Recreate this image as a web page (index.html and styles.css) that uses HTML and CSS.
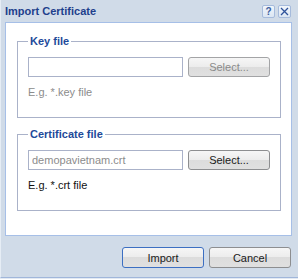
FILE: index.html
```html
<!DOCTYPE html>
<html lang="en">
<head>
  <meta charset="UTF-8" />
  <title>Import Certificate</title>
  <link rel="stylesheet" href="styles.css">
</head>
<body>

  <!-- Dialog window -->
  <div class="dialog">
    <div class="titlebar">
      <span class="title">Import Certificate</span>
      <div class="tools">
        <span class="tool tool-help">?</span>
        <span class="tool">
          <svg width="11" height="11" viewBox="0 0 11 11">
            <path d="M2 2 L9 9 M9 2 L2 9" stroke="#2d529b" stroke-width="1.3" fill="none" />
          </svg>
        </span>
      </div>
    </div>

    <!-- Main panel -->
    <div class="panel">
      <fieldset class="group">
        <legend>Key file</legend>
        <div class="row">
          <input class="field" type="text" value="" readonly>
          <button class="btn" disabled>Select...</button>
        </div>
        <p class="hint muted">E.g. *.key file</p>
      </fieldset>

      <fieldset class="group group-cert">
        <legend>Certificate file</legend>
        <div class="row">
          <input class="field" type="text" value="demopavietnam.crt" readonly>
          <button class="btn">Select...</button>
        </div>
        <p class="hint">E.g. *.crt file</p>
      </fieldset>
    </div>

    <!-- Footer buttons -->
    <div class="actions">
      <button class="btn btn-focus">Import</button>
      <button class="btn">Cancel</button>
    </div>
  </div>

</body>
</html>
```

FILE: styles.css
```css
* {
  margin: 0;
  padding: 0;
  box-sizing: border-box;
}

body {
  font-family: "Liberation Sans", Arial, sans-serif;
  font-size: 11px;
  background-color: #e2e9f2;
  width: 298px;
  height: 279px;
  overflow: hidden;
}

/* Dialog window */
.dialog {
  width: 298px;
  height: 278px;
  background-color: #d0dbe8;
  border-left: 1px solid #e6edf5;
  border-bottom: 1px solid #a0b6da;
  padding: 0 6px 0 4px;
}

.titlebar {
  height: 22px;
  display: flex;
  align-items: center;
  justify-content: space-between;
  padding-right: 1px;
}

.title {
  font-weight: bold;
  font-size: 11px;
  color: #1e3f8c;
  line-height: 22px;
}

.tools {
  display: flex;
  gap: 3px;
  align-self: flex-start;
  margin-top: 5px;
}

.tool {
  width: 13px;
  height: 13px;
  display: flex;
  align-items: center;
  justify-content: center;
  background: linear-gradient(#f0f5fb, #dbe6f3);
  border: 1px solid #a6bbdc;
  border-radius: 2px;
}

.tool-help {
  font-weight: bold;
  font-size: 10px;
  color: #3a5d9e;
  line-height: 11px;
}

/* Main panel */
.panel {
  height: 214px;
  background-color: #fff;
  border: 1px solid #a6bfe7;
  padding-top: 12px;
}

.group {
  margin: 0 10px 0 11px;
  border: 1px solid #aab2c9;
  padding: 9px 10px 18px 10px;
}

.group-cert {
  margin-top: 10px;
}

.group legend {
  font-weight: bold;
  font-size: 11px;
  line-height: 13px;
  color: #1e4a9a;
  padding: 0 2px;
}

.row {
  display: flex;
  gap: 5px;
}

.field {
  width: 155px;
  height: 20px;
  border: 1px solid #aab2c9;
  padding: 0 3px;
  font-family: "Liberation Sans", Arial, sans-serif;
  font-size: 11px;
  color: #8c8c8c;
  background: #fff;
  outline: none;
}

.hint {
  margin-top: 9px;
  line-height: 13px;
  color: #111;
}

.hint.muted {
  color: #8c8c8c;
}

/* Buttons */
.btn {
  width: 82px;
  height: 20px;
  font-family: "Liberation Sans", Arial, sans-serif;
  font-size: 11px;
  color: #1a1a1a;
  background: linear-gradient(#f6f6f6 0%, #ececec 50%, #dcdcdc 50%, #e0e0e0 100%);
  border: 1px solid #8d8e90;
  border-radius: 3px;
  cursor: pointer;
}

.btn:disabled {
  color: #8a8a8a;
  border-color: #a3a4a6;
  cursor: default;
}

.btn-focus {
  border-color: #3c6fc2;
}

.actions {
  display: flex;
  justify-content: flex-end;
  gap: 5px;
  margin-top: 11px;
  padding-right: 1px;
}

.actions .btn {
  height: 21px;
}
```
